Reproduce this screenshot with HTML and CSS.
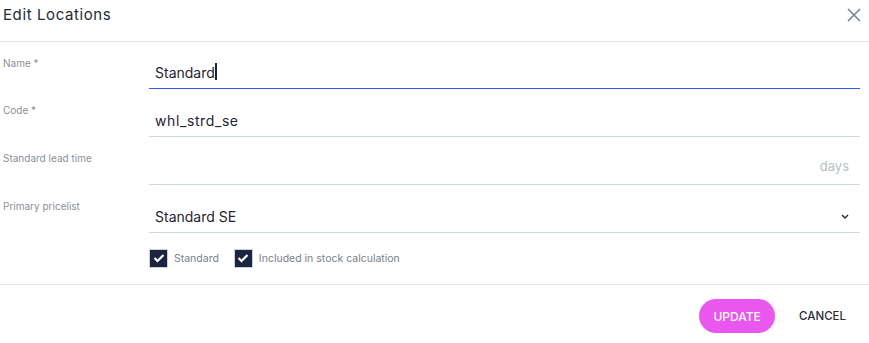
FILE: index.html
```html
<!DOCTYPE html>
<html>
<head>
<meta charset="utf-8">
<link rel="stylesheet" href="styles.css">
</head>
<body>
<div class="dialog">
  <header class="head">
    <h1 class="title">Edit Locations</h1>
    <button class="close" aria-label="Close">
      <svg width="14" height="14" viewBox="0 0 14 14"><path d="M1 1L13 13M13 1L1 13" stroke="#7b8492" stroke-width="1.6" fill="none"/></svg>
    </button>
  </header>
  <form class="form">
    <div class="row">
      <label class="label">Name *</label>
      <div class="field active"><span class="value">Standard</span><span class="caret"></span></div>
    </div>
    <div class="row">
      <label class="label">Code *</label>
      <div class="field"><span class="value code">whl_strd_se</span></div>
    </div>
    <div class="row">
      <label class="label">Standard lead time</label>
      <div class="field"><span class="value"></span><span class="suffix">days</span></div>
    </div>
    <div class="row">
      <label class="label">Primary pricelist</label>
      <div class="field"><span class="value">Standard SE</span>
        <svg class="chev" width="8" height="5" viewBox="0 0 8 5"><path d="M1 1L4 4L7 1" stroke="#1e2a4a" stroke-width="1.4" fill="none"/></svg>
      </div>
    </div>
    <div class="checks">
      <label class="check"><span class="box"><svg width="12" height="10" viewBox="0 0 12 10"><path d="M1.5 5L4.5 8L10.5 2" stroke="#fff" stroke-width="2.2" fill="none"/></svg></span>Standard</label>
      <label class="check"><span class="box"><svg width="12" height="10" viewBox="0 0 12 10"><path d="M1.5 5L4.5 8L10.5 2" stroke="#fff" stroke-width="2.2" fill="none"/></svg></span>Included in stock calculation</label>
    </div>
  </form>
  <footer class="foot">
    <button class="btn primary">UPDATE</button>
    <button class="btn text">CANCEL</button>
  </footer>
</div>
</body>
</html>
```
FILE: styles.css
```css
* { box-sizing: border-box; }
body {
  margin: 0;
  background: #fff;
  font-family: Inter, Roboto, "Liberation Sans", sans-serif;
  color: #1f2430;
}
.dialog { width: 869px; }
.head {
  height: 42px;
  border-bottom: 1px solid #e2e4e7;
  display: flex;
  align-items: flex-start;
  justify-content: space-between;
  padding: 5px 8px 0 3px;
}
.title {
  margin: 0;
  font-size: 15px;
  font-weight: 400;
  line-height: 20px;
  letter-spacing: 0.6px;
  color: #252a33;
}
.close {
  border: 0;
  background: none;
  padding: 0;
  margin-top: 3px;
  width: 14px;
  height: 14px;
  display: flex;
}
.form { padding: 0 9px 0 0; }
.row {
  display: grid;
  grid-template-columns: 149px 1fr;
  height: 48px;
}
.row:first-child { height: 47px; }
.label {
  padding: 15px 0 0 3px;
  font-size: 10px;
  line-height: 12px;
  color: #8a9097;
}
.field {
  border-bottom: 1px solid #cddbe1;
  display: flex;
  align-items: flex-end;
  padding: 0 11px 5px 6px;
  font-size: 14px;
  line-height: 20px;
  color: #1f2430;
}
.field.active { border-bottom-color: #2f5cf5; }
.value { flex: 0 0 auto; }
.code { letter-spacing: 0.6px; }
.caret {
  width: 2px;
  height: 17px;
  background: #1f2430;
  margin: 0 0 3px 0;
}
.suffix {
  margin-left: auto;
  font-size: 13px;
  color: #b7bfc6;
  padding-bottom: 3px;
}
.chev { margin-left: auto; margin-bottom: 8px; margin-right: 0; }
.checks {
  display: flex;
  gap: 15px;
  padding: 15px 0 0 149px;
  height: 52px;
  border-bottom: 1px solid #e2e4e7;
  margin-right: -9px;
}
.check {
  display: flex;
  align-items: center;
  gap: 6px;
  font-size: 10.5px;
  color: #79808a;
  height: 20px;
}
.box {
  width: 19px;
  height: 19px;
  background: #1d2440;
  border: 1px solid #c5d4de;
  display: flex;
  align-items: center;
  justify-content: center;
}
.foot {
  display: flex;
  justify-content: flex-end;
  align-items: center;
  padding: 14px 13px 0 0;
  gap: 14px;
}
.btn {
  font-family: inherit;
  font-size: 12px;
  font-weight: 500;
  border: 0;
  height: 34px;
  cursor: pointer;
}
.primary {
  width: 76px;
  border-radius: 17px;
  background: #e957ef;
  color: #fff;
}
.text {
  background: none;
  color: #2a2e36;
  padding: 0 10px;
  font-size: 11.5px;
}
```
